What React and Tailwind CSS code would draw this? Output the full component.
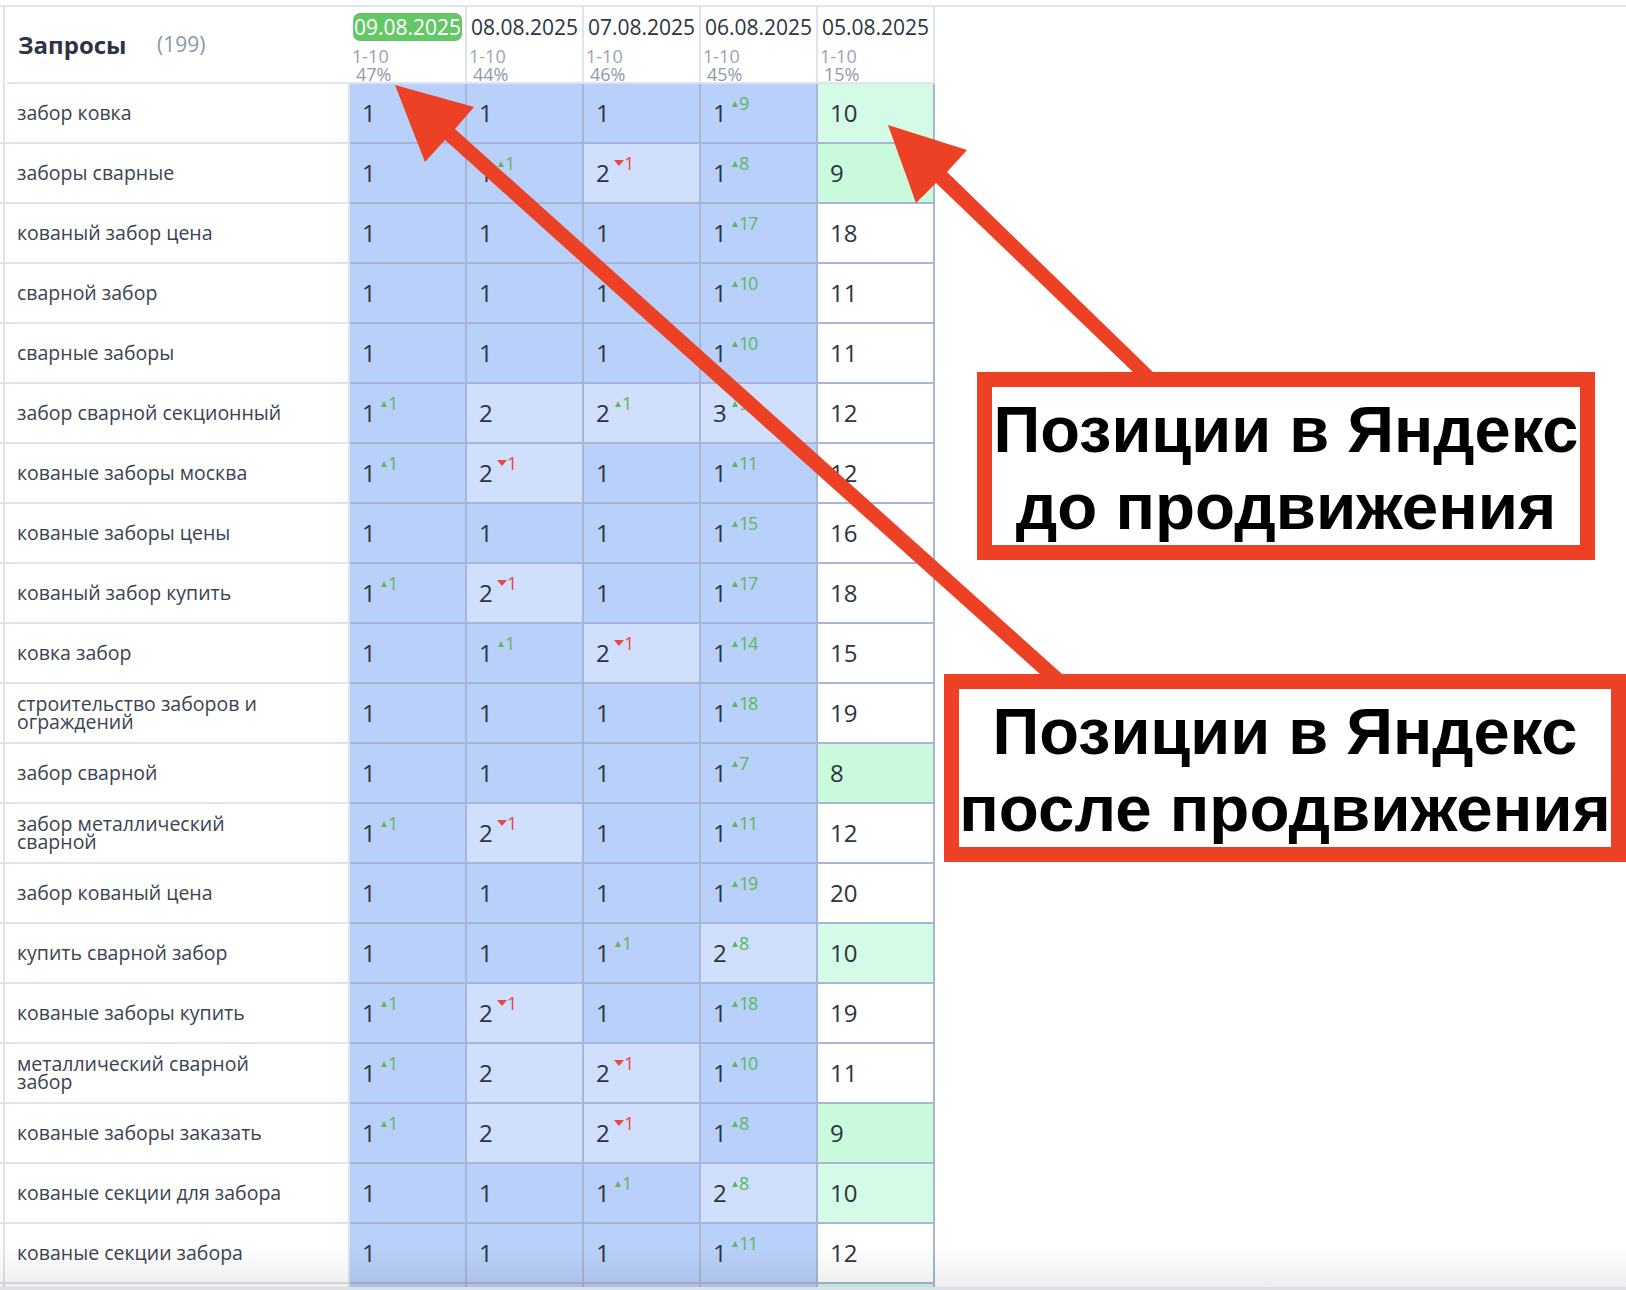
const U = (n) => ({ d: 'u', n });
const D = (n) => ({ d: 'd', n });

const rows = [
  ['забор ковка', [1], [1], [1], [1, U(9)], [10]],
  ['заборы сварные', [1], [1, U(1)], [2, D(1)], [1, U(8)], [9]],
  ['кованый забор цена', [1], [1], [1], [1, U(17)], [18]],
  ['сварной забор', [1], [1], [1], [1, U(10)], [11]],
  ['сварные заборы', [1], [1], [1], [1, U(10)], [11]],
  ['забор сварной секционный', [1, U(1)], [2], [2, U(1)], [3, U(9)], [12]],
  ['кованые заборы москва', [1, U(1)], [2, D(1)], [1], [1, U(11)], [12]],
  ['кованые заборы цены', [1], [1], [1], [1, U(15)], [16]],
  ['кованый забор купить', [1, U(1)], [2, D(1)], [1], [1, U(17)], [18]],
  ['ковка забор', [1], [1, U(1)], [2, D(1)], [1, U(14)], [15]],
  ['строительство заборов и ограждений', [1], [1], [1], [1, U(18)], [19]],
  ['забор сварной', [1], [1], [1], [1, U(7)], [8]],
  ['забор металлический сварной', [1, U(1)], [2, D(1)], [1], [1, U(11)], [12]],
  ['забор кованый цена', [1], [1], [1], [1, U(19)], [20]],
  ['купить сварной забор', [1], [1], [1, U(1)], [2, U(8)], [10]],
  ['кованые заборы купить', [1, U(1)], [2, D(1)], [1], [1, U(18)], [19]],
  ['металлический сварной забор', [1, U(1)], [2], [2, D(1)], [1, U(10)], [11]],
  ['кованые заборы заказать', [1, U(1)], [2], [2, D(1)], [1, U(8)], [9]],
  ['кованые секции для забора', [1], [1], [1, U(1)], [2, U(8)], [10]],
  ['кованые секции забора', [1], [1], [1], [1, U(11)], [12]],
  ['', [1, null, true], [1, null, true], [1, null, true], [1, null, true], [9, null, true]],
];

const heads = [
  ['09.08.2025', '47%'],
  ['08.08.2025', '44%'],
  ['07.08.2025', '46%'],
  ['06.08.2025', '45%'],
  ['05.08.2025', '15%'],
];

function cellBg(v) {
  if (v === 1) return 'bg-[#b9d0fa]';
  if (v <= 3) return 'bg-[#d0dffb]';
  if (v === 10) return 'bg-[#d3fbe5]';
  if (v <= 9) return 'bg-[#c9fadc]';
  return 'bg-white';
}

function Delta({ delta }) {
  const up = delta.d === 'u';
  return (
    <span className={`absolute top-[9px] flex items-center text-[18px] leading-[20px] tracking-[-1.2px] ${up ? 'left-[31px] text-[#5cb860]' : 'left-[30px] text-[#e5484a]'}`}>
      {up ? (
        <span className="mr-[1px] mt-[1px] h-0 w-0 border-x-[3px] border-b-[6px] border-x-transparent border-b-[#5cb860]" />
      ) : (
        <span className="mt-[-1px] h-0 w-0 border-x-[5px] border-t-[6px] border-x-transparent border-t-[#e5484a]" />
      )}
      {delta.n}
    </span>
  );
}

function Cell({ data }) {
  const [v, delta, blank] = data;
  return (
    <div className={`relative flex h-full w-[117px] shrink-0 items-center border-b-2 border-r-2 border-[#a7b5d6] pl-[12px] text-[24px] text-[#2b3440] ${cellBg(v)}`}>
      {blank ? null : v}
      {delta && <Delta delta={delta} />}
    </div>
  );
}

function Row({ row }) {
  const [name, ...cells] = row;
  return (
    <div className="flex h-[60px]">
      <div className="flex h-full w-[350px] shrink-0 items-center border-b-2 border-r-2 border-[#dfe3ea]">
        <div className="ml-[3px] flex h-full w-[345px] items-center border-l-2 border-[#dfe3ea] pl-[12px]">
          <span className="w-[270px] text-[19.5px] leading-[18px] text-[#3a4350]">{name}</span>
        </div>
      </div>
      {cells.map((c, i) => (
        <Cell key={i} data={c} />
      ))}
    </div>
  );
}

function Note({ className, children }) {
  return (
    <div className={`absolute flex h-[188px] flex-col items-center justify-center whitespace-nowrap border-[15px] border-[#ec4125] bg-white pt-[3px] text-center font-['Liberation_Sans',Arial,sans-serif] text-[65.5px] font-bold leading-[77px] text-black ${className}`}>
      {children}
    </div>
  );
}

export default function App() {
  return (
    <div className="relative h-[1290px] w-[1626px] overflow-hidden bg-white font-['Open_Sans','Noto_Sans',sans-serif]">
      <div className="pt-[5px]">
        <div className="h-[2px] w-full bg-[#dfe3ea]" />
        <div className="flex h-[77px]">
          <div className="flex h-full w-[350px] shrink-0">
            <div className="ml-[3px] h-full w-[4px] border-l-2 border-[#dfe3ea]" />
            <div className="flex h-full flex-1 items-center border-b-2 border-[#dfe3ea] pl-[11px]">
              <span className="w-[139px] text-[24px] font-bold text-[#2b3440]">Запросы</span>
              <span className="text-[21px] text-[#8a97ad]">(199)</span>
            </div>
          </div>
          {heads.map(([date, pct], i) => (
            <div key={date} className="flex h-full w-[117px] shrink-0 flex-col border-b-2 border-r-2 border-[#dfe3ea] pl-[3px] pt-[6px]">
              <div className={`flex h-[28px] w-[109px] items-center justify-center whitespace-nowrap rounded-[7px] pt-[2px] text-[21px] ${i === 0 ? 'bg-[#66c768] text-white' : 'text-[#2b3440]'}`}>
                {date}
              </div>
              <div className="ml-[-1px] mt-[6px] text-[18px] leading-[19px] text-[#9aa3b5]">1-10</div>
              <div className="pl-[3px] text-[18px] leading-[17px] text-[#8f99ab]">{pct}</div>
            </div>
          ))}
        </div>
        {rows.map((r, i) => (
          <Row key={i} row={r} />
        ))}
      </div>

      <svg className="absolute left-0 top-0 h-[1290px] w-[1626px]" viewBox="0 0 1626 1290" fill="#ec4125">
        <polygon points="395,85 474,107 455,129 1062,674 1040,674 445,140 425,162" />
        <polygon points="888,125 967,150 947,172 1153,372 1133,372 936,183 916,203" />
      </svg>

      <Note className="left-[977px] top-[372px] w-[618px]">
        <div className="text-[65px]">Позиции в Яндекс</div>
        <div>до продвижения</div>
      </Note>
      <Note className="left-[944px] top-[674px] w-[682px]">
        <div className="text-[65px]">Позиции в Яндекс</div>
        <div>после продвижения</div>
      </Note>

      <div className="absolute bottom-[3px] left-0 h-[42px] w-full bg-gradient-to-b from-transparent to-black/[0.07]" />
      <div className="absolute bottom-0 left-0 h-[3px] w-full bg-[#dcdfe3]" />
    </div>
  );
}
